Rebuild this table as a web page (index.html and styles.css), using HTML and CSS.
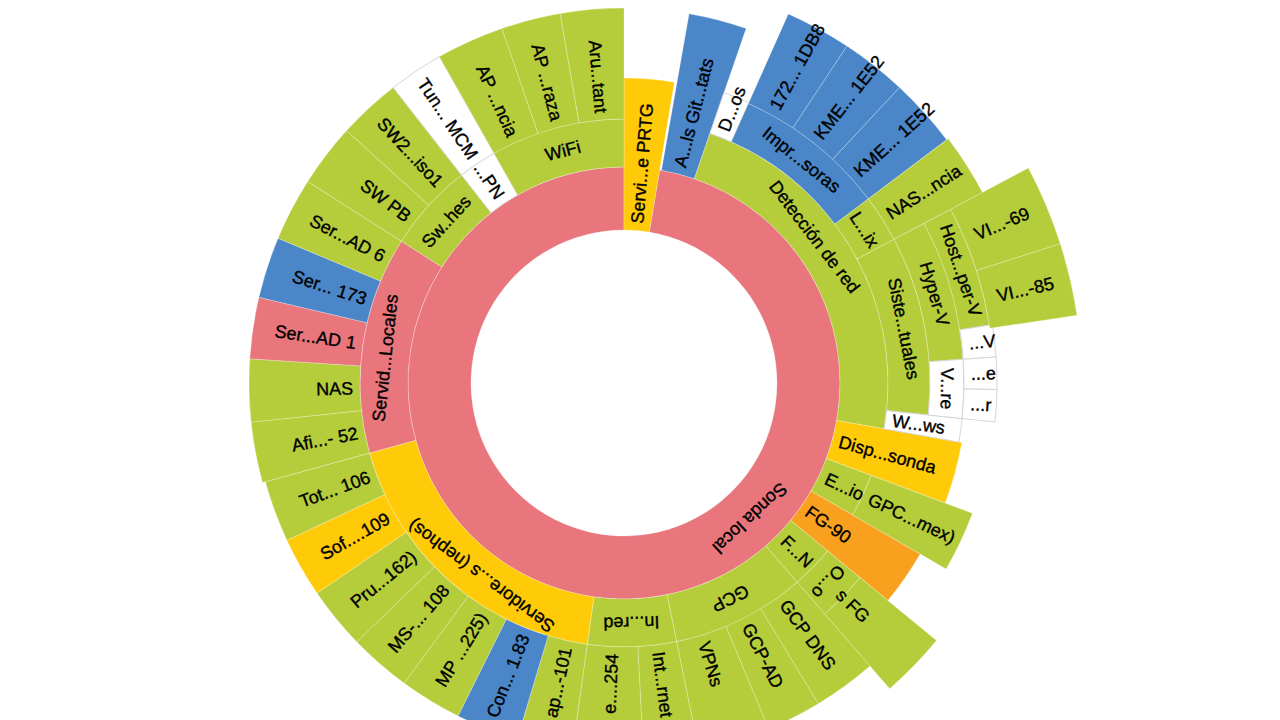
FILE: index.html
```html
<!DOCTYPE html>
<html lang="es">
<head>
<meta charset="utf-8">
<title>Sunburst</title>
<link rel="stylesheet" href="styles.css">
</head>
<body>
<main class="page">
  <svg id="chart" class="chart" width="1280" height="720" viewBox="0 0 1280 720" xmlns="http://www.w3.org/2000/svg">
    <g id="segments" class="segments"></g>
    <g id="labels" class="labels"></g>
  </svg>
</main>
<script src="script.js"></script>
</body>
</html>
```

FILE: styles.css
```css
html, body {
  margin: 0;
  padding: 0;
  background: #ffffff;
  overflow: hidden;
}

.page {
  width: 1280px;
  height: 720px;
}

.chart {
  display: block;
}

.seg {
  stroke: rgba(255, 255, 255, 0.25);
  stroke-width: 1;
}

.seg-white {
  stroke: #d6d6d6;
  stroke-width: 1;
}

.lbl {
  font-family: "Liberation Sans", Arial, sans-serif;
  font-size: 18px;
  fill: #000000;
  stroke: #000000;
  stroke-width: 0.35px;
  dominant-baseline: central;
}
```

FILE: script.js
```js
(function () {
  var NS = 'http://www.w3.org/2000/svg';
  var CX = 624, CY = 383;
  var G = '#b5cd3a', R = '#e8767c', B = '#4a86c8', Y = '#ffca08', O = '#f9a11e', W = '#ffffff';

  // [startAngle, endAngle, innerR, outerR, colour, label, mode, options]
  var data = [
    // level 1
    [9.5, 360, 153, 216, R, 'Sonda local', 't', { la: 137 }],
    [0, 9.5, 153, 305, Y, 'Servi...e PRTG', 'r'],
    // level 2
    [10, 19, 216, 375, B, 'A...ls Git...tats', 'r'],
    [19, 100, 216, 264, G, 'Detección de red', 't', { la: 52.5 }],
    [100, 110.5, 216, 343, Y, 'Disp...sonda', 'r'],
    [110.5, 120, 216, 264, G, 'E...io', 'r'],
    [120, 129.5, 216, 342, O, 'FG-90', 'r'],
    [129.5, 139, 216, 264, G, 'F...N', 'r'],
    [139, 168.5, 216, 264, G, 'GCP', 't'],
    [168.5, 188, 216, 264, G, 'In...red', 't'],
    [188, 254.6, 216, 264, Y, 'Servidore...s (nephos)', 't', { la: 216.5 }],
    [254.6, 302.5, 216, 264, R, 'Servid...Locales', 't', { la: 276 }],
    [302.5, 322, 216, 264, G, 'Sw..hes', 't'],
    [322, 330.5, 216, 264, W, '...PN', 'r'],
    [330.5, 360, 216, 264, G, 'WiFi', 't'],
    // level 3
    [19, 24, 264, 307, W, 'D...os', 'r'],
    [24, 53, 264, 306, B, 'Impr...soras', 't'],
    [53, 62, 264, 306, G, 'L...ix', 't'],
    [62, 96, 264, 306, G, 'Siste...tuales', 't'],
    [96, 100, 264, 340, W, 'W...ws', 'r'],
    [110.5, 120, 264, 372, G, 'GPC...mex)', 'r'],
    [129.5, 139, 264, 306, G, 'O...o', 't'],
    [139, 148.8, 264, 375, G, 'GCP DNS', 'r'],
    [148.8, 157.3, 264, 375, G, 'GCP-AD', 'r'],
    [157.3, 168.5, 264, 375, G, 'VPNs', 'r'],
    [168.5, 177, 264, 375, G, 'Int...rnet', 'r'],
    [177, 188, 264, 375, G, 'e....254', 'r'],
    [188, 196.7, 264, 372, G, 'ap...-101', 'r'],
    [196.7, 206.5, 264, 372, B, 'Con... 1.83', 'r'],
    [206.5, 216.2, 264, 372, G, 'MP ...225)', 'r'],
    [216.2, 225.9, 264, 372, G, 'MS-... 108', 'r'],
    [225.9, 235.6, 264, 372, G, 'Pru...162)', 'r'],
    [235.6, 245, 264, 372, Y, 'Sof....109', 'r'],
    [245, 254.6, 264, 372, G, 'Tot... 106', 'r'],
    [254.6, 264, 264, 375, G, 'Afi...- 52', 'r'],
    [264, 273.7, 264, 375, G, 'NAS', 'r'],
    [273.7, 283.2, 264, 375, R, 'Ser...AD 1', 'r'],
    [283.2, 292.7, 264, 375, B, 'Ser... 173', 'r'],
    [292.7, 302.5, 264, 375, G, 'Ser...AD 6', 'r'],
    [302.5, 312.3, 264, 375, G, 'SW PB', 'r'],
    [312.3, 322, 264, 375, G, 'SW2...iso1', 'r'],
    [322, 330.5, 264, 375, W, 'Tun... MCM', 'r'],
    [330.5, 341, 264, 375, G, 'AP ...ncia', 'r'],
    [341, 350.2, 264, 375, G, 'AP ...raza', 'r'],
    [350.2, 360, 264, 375, G, 'Aru...tant', 'r'],
    // level 4
    [24, 33.5, 306, 404, B, '172... 1DB8', 'r'],
    [33.5, 43, 306, 404, B, 'KME... 1E52', 'r'],
    [43, 53, 306, 404, B, 'KME... 1E52', 'r'],
    [53, 62, 306, 406, G, 'NAS...ncia', 'r'],
    [62, 86, 306, 340, G, 'Hyper-V', 't'],
    [86, 96, 306, 340, W, 'V...re', 't'],
    [129.5, 139, 306, 405, G, 's FG', 'r', { lr: 300 }],
    // level 5
    [62, 81, 340, 370, G, 'Host...per-V', 't'],
    [81, 86, 340, 373, W, '...V', 'r'],
    [86, 91, 340, 373, W, '...e', 'r'],
    [91, 96, 340, 373, W, '...r', 'r'],
    // level 6
    [62, 72.3, 370, 458, G, 'VI...-69', 'r', { lr: 381 }],
    [72.3, 81.5, 370, 458, G, 'VI...-85', 'r', { lr: 383 }]
  ];

  function pt(r, a) {
    var t = a * Math.PI / 180;
    return [CX + r * Math.sin(t), CY - r * Math.cos(t)];
  }

  function f(n) { return n.toFixed(2); }

  function arc(a0, a1, r0, r1) {
    var large = (a1 - a0) > 180 ? 1 : 0;
    var p1 = pt(r1, a0), p2 = pt(r1, a1), p3 = pt(r0, a1), p4 = pt(r0, a0);
    return 'M' + f(p1[0]) + ' ' + f(p1[1]) +
      'A' + r1 + ' ' + r1 + ' 0 ' + large + ' 1 ' + f(p2[0]) + ' ' + f(p2[1]) +
      'L' + f(p3[0]) + ' ' + f(p3[1]) +
      'A' + r0 + ' ' + r0 + ' 0 ' + large + ' 0 ' + f(p4[0]) + ' ' + f(p4[1]) + 'Z';
  }

  var segG = document.getElementById('segments');
  var lblG = document.getElementById('labels');

  data.forEach(function (d) {
    var a0 = d[0], a1 = d[1], r0 = d[2], r1 = d[3], col = d[4], text = d[5], mode = d[6], o = d[7] || {};
    var path = document.createElementNS(NS, 'path');
    path.setAttribute('d', arc(a0, a1, r0, r1));
    path.setAttribute('fill', col);
    path.setAttribute('class', col === W ? 'seg seg-white' : 'seg');
    segG.appendChild(path);

    var la = (o.la !== undefined) ? o.la : (a0 + a1) / 2;
    var lr, rot, anchor;
    if (mode === 't') {
      lr = (o.lr !== undefined) ? o.lr : (r0 + r1) / 2;
      rot = la;
      anchor = 'middle';
    } else {
      lr = (o.lr !== undefined) ? o.lr : r0 + 7;
      if (la < 180) { rot = la - 90; anchor = 'start'; }
      else { rot = la + 90 - 360; anchor = 'end'; }
    }
    var p = pt(lr, la);
    var t = document.createElementNS(NS, 'text');
    t.setAttribute('class', 'lbl');
    t.setAttribute('x', f(p[0]));
    t.setAttribute('y', f(p[1]));
    t.setAttribute('text-anchor', anchor);
    t.setAttribute('transform', 'rotate(' + f(rot) + ' ' + f(p[0]) + ' ' + f(p[1]) + ')');
    t.textContent = text;
    lblG.appendChild(t);
  });
})();
```
